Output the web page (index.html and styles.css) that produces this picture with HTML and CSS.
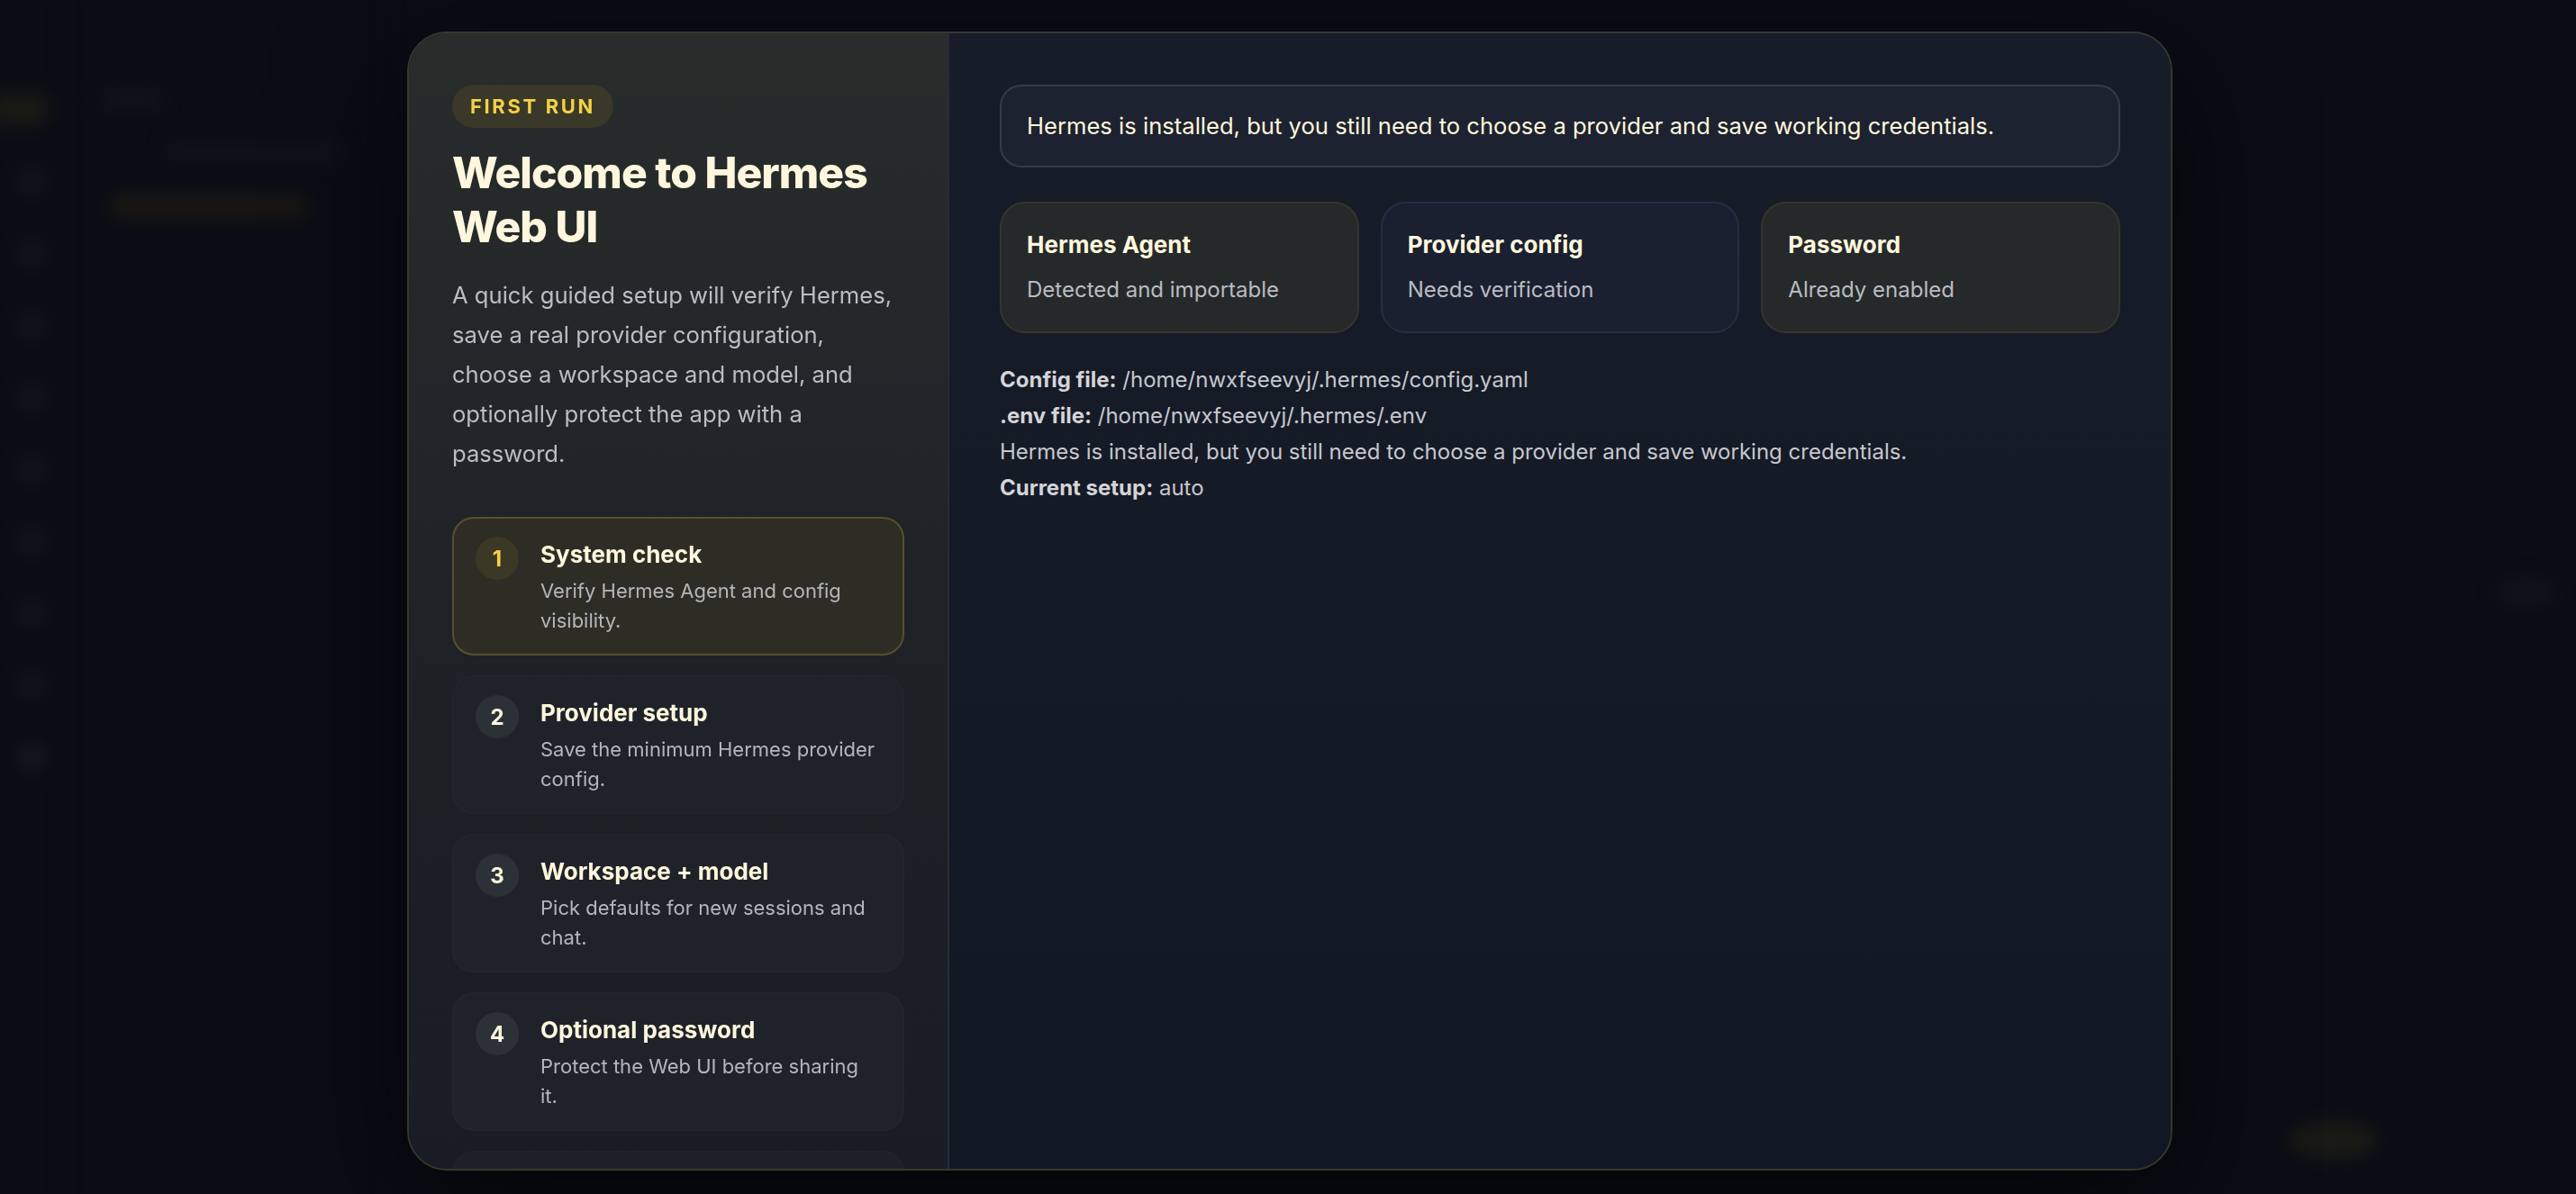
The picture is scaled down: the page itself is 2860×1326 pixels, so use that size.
FILE: index.html
```html
<!DOCTYPE html>
<html lang="en">

<head>
    <meta charset="UTF-8">
    <title>Hermes Web UI - First run</title>
    <link rel="stylesheet" href="styles.css">
</head>

<body>

    <div class="app">
        <aside class="rail">
            <span class="rail-brand"></span>
            <span class="rail-item"></span>
            <span class="rail-item"></span>
            <span class="rail-item"></span>
            <span class="rail-item"></span>
            <span class="rail-item"></span>
            <span class="rail-item"></span>
            <span class="rail-item"></span>
            <span class="rail-item"></span>
            <span class="rail-item round"></span>
        </aside>
        <nav class="sessions">
            <span class="sess-title"></span>
            <span class="sess-line"></span>
            <span class="sess-active"></span>
        </nav>
        <main class="chat">
            <span class="chat-dot"></span>
            <span class="chat-send"></span>
        </main>
    </div>

    <div class="overlay">
        <section class="wizard">

            <div class="intro">
                <span class="badge">FIRST RUN</span>
                <h1>Welcome to Hermes Web UI</h1>
                <p class="lead">A quick guided setup will verify Hermes, save a real provider configuration, choose a workspace and model, and optionally protect the app with a password.</p>

                <ol class="steps">
                    <li class="step current">
                        <span class="num">1</span>
                        <div>
                            <h2>System check</h2>
                            <p>Verify Hermes Agent and config visibility.</p>
                        </div>
                    </li>
                    <li class="step">
                        <span class="num">2</span>
                        <div>
                            <h2>Provider setup</h2>
                            <p>Save the minimum Hermes provider config.</p>
                        </div>
                    </li>
                    <li class="step">
                        <span class="num">3</span>
                        <div>
                            <h2>Workspace + model</h2>
                            <p>Pick defaults for new sessions and chat.</p>
                        </div>
                    </li>
                    <li class="step">
                        <span class="num">4</span>
                        <div>
                            <h2>Optional password</h2>
                            <p>Protect the Web UI before sharing it.</p>
                        </div>
                    </li>
                    <li class="step tail"></li>
                </ol>
            </div>

            <div class="pane">
                <div class="notice">Hermes is installed, but you still need to choose a provider and save working credentials.</div>

                <div class="checks">
                    <div class="check ok">
                        <h3>Hermes Agent</h3>
                        <p>Detected and importable</p>
                    </div>
                    <div class="check pending">
                        <h3>Provider config</h3>
                        <p>Needs verification</p>
                    </div>
                    <div class="check ok">
                        <h3>Password</h3>
                        <p>Already enabled</p>
                    </div>
                </div>

                <div class="details">
                    <p><b>Config file:</b> /home/nwxfseevyj/.hermes/config.yaml</p>
                    <p><b>.env file:</b> /home/nwxfseevyj/.hermes/.env</p>
                    <p>Hermes is installed, but you still need to choose a provider and save working credentials.</p>
                    <p><b>Current setup:</b> auto</p>
                </div>
            </div>

        </section>
    </div>

</body>

</html>
```

FILE: styles.css
```css
* {
    margin: 0;
    padding: 0;
    box-sizing: border-box;
}

body {
    height: 100vh;
    overflow: hidden;
    background: #0a0d15;
    font-family: Inter, "Noto Sans", sans-serif;
    color: #fff7dd;
}

/* blurred app behind the dialog */

.app {
    height: 100vh;
    display: flex;
    filter: blur(10px);
    opacity: 0.55;
}

.rail {
    width: 72px;
    display: flex;
    flex-direction: column;
    align-items: center;
    gap: 46px;
    padding-top: 104px;
    border-right: 2px solid #10141c;
}

.rail-brand {
    width: 64px;
    height: 34px;
    margin-left: -30px;
    background: #2a2514;
    border-radius: 8px;
}

.rail-item {
    width: 34px;
    height: 34px;
    border-radius: 10px;
    background: #151a24;
}

.rail-item.round {
    border-radius: 50%;
    background: #1a1f2b;
}

.sessions {
    width: 360px;
    display: flex;
    flex-direction: column;
    gap: 36px;
    padding: 100px 0 0 40px;
    border-right: 2px solid #0f131b;
}

.sess-title {
    width: 70px;
    height: 20px;
    background: #151a24;
    border-radius: 6px;
}

.sess-line {
    width: 200px;
    height: 22px;
    margin-left: 70px;
    background: #121722;
    border-radius: 6px;
}

.sess-active {
    width: 220px;
    height: 30px;
    margin-left: 10px;
    background: #241f12;
    border-radius: 8px;
}

.chat {
    flex: 1;
    display: flex;
    flex-direction: column;
    justify-content: space-between;
    align-items: flex-end;
    padding: 640px 20px 40px 0;
}

.chat-dot {
    width: 70px;
    height: 36px;
    border-radius: 50%;
    background: #141823;
}

.chat-send {
    width: 100px;
    height: 40px;
    margin-right: 200px;
    border-radius: 50%;
    background: #2a2614;
}

/* dialog */

.overlay {
    position: fixed;
    inset: 0;
    display: flex;
    justify-content: center;
    padding: 35px 0 0 4px;
}

.wizard {
    width: 1960px;
    height: 1265px;
    display: grid;
    grid-template-columns: 600px 1fr;
    border: 2px solid #38372b;
    border-radius: 44px;
    overflow: hidden;
    background: #151a26;
    box-shadow: 0 40px 140px rgba(0, 0, 0, 0.7);
}

.intro {
    padding: 57px 48px 0 48px;
    border-right: 2px solid #262b3c;
    background: linear-gradient(180deg, #282c2b 0%, #1e2226 55%, #181c24 100%);
    overflow: hidden;
}

.badge {
    display: inline-block;
    height: 48px;
    padding: 0 20px;
    line-height: 48px;
    border-radius: 24px;
    background: #3a3829;
    color: #f3d244;
    font-size: 22px;
    font-weight: 700;
    letter-spacing: 0.12em;
}

h1 {
    margin-top: 20px;
    font-size: 48px;
    line-height: 60px;
    font-weight: 800;
    letter-spacing: -0.02em;
    color: #fff7dd;
}

.lead {
    margin-top: 24px;
    font-size: 25.6px;
    line-height: 44px;
    color: #babdc3;
}

.steps {
    list-style: none;
    margin-top: 48px;
    display: flex;
    flex-direction: column;
    gap: 22px;
}

.step {
    display: flex;
    gap: 24px;
    padding: 20px 24px;
    border: 2px solid #22262c;
    border-radius: 24px;
    background: #1f2329;
}

.step.current {
    border-color: #57502d;
    background: #2e2d25;
}

.step.tail {
    height: 154px;
    background: #1c2027;
    border-color: #1f232a;
}

.num {
    flex: 0 0 48px;
    height: 48px;
    border-radius: 50%;
    display: flex;
    align-items: center;
    justify-content: center;
    background: #2c3037;
    font-size: 24px;
    font-weight: 700;
    color: #fff7dd;
}

.step.current .num {
    background: #3b3826;
    color: #f4d13f;
}

.step h2 {
    font-size: 26px;
    line-height: 40px;
    font-weight: 700;
    color: #fff7dd;
}

.step p {
    margin-top: 4px;
    font-size: 22px;
    line-height: 33px;
    color: #b3b6bc;
}

.pane {
    padding: 57px 56px 0 56px;
    background: linear-gradient(180deg, #171c29 0%, #121724 100%);
}

.notice {
    padding: 24px 28px;
    border: 2px solid #363b49;
    border-radius: 24px;
    background: #1d2230;
    font-size: 25.6px;
    line-height: 40px;
    color: #fff7dd;
}

.checks {
    margin-top: 38px;
    display: grid;
    grid-template-columns: repeat(3, 1fr);
    gap: 24px;
}

.check {
    padding: 28px;
    border: 2px solid #35352a;
    border-radius: 28px;
    background: #25292a;
}

.check.pending {
    border-color: #2a2c44;
    background: #1b2030;
}

.check h3 {
    font-size: 26px;
    line-height: 36px;
    font-weight: 700;
    color: #fff7dd;
}

.check p {
    margin-top: 14px;
    font-size: 24px;
    line-height: 36px;
    color: #b9bcc2;
}

.details {
    margin-top: 32px;
    font-size: 24px;
    line-height: 40px;
    color: #c6c8cd;
}

.details b {
    font-weight: 700;
    color: #d4d4d6;
}
```
